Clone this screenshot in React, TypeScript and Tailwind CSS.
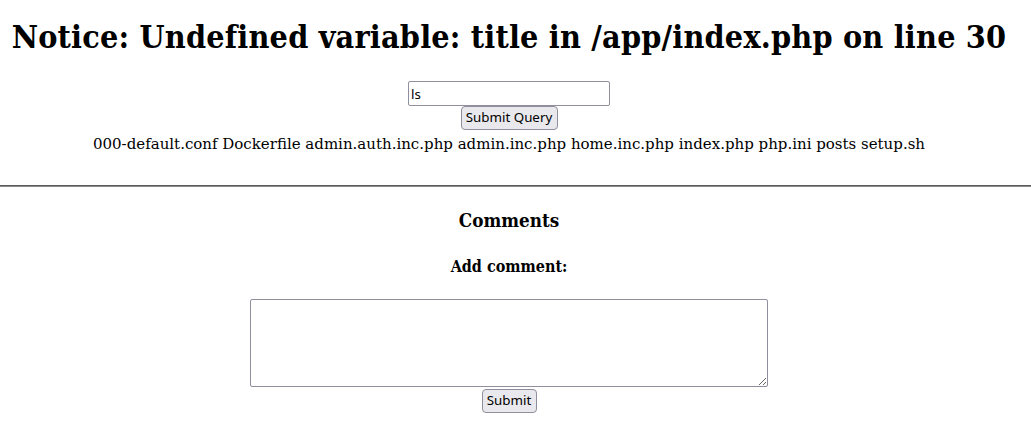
export default function App() {
    return (
        <div className="min-h-screen bg-white text-center text-black">
            <div className="pr-[13px] font-['DejaVu_Serif',serif]">
                {/* PHP notice */}
                <h1 className="pt-[19px] font-['DejaVu_Serif_Condensed',serif] text-[32px] font-bold leading-[37px] tracking-[0.2px]">
                    Notice: Undefined variable: title in /app/index.php on line 30
                </h1>

                {/* Command form */}
                <form className="mt-[25px] flex flex-col items-center font-['Noto_Sans',sans-serif] text-[13.33px]">
                    <input
                        type="text"
                        defaultValue="ls"
                        className="h-[25px] w-[202px] rounded-[2px] border border-[#8f8f9d] bg-white px-[2px] text-black outline-none"
                    />
                    <button
                        type="button"
                        className="h-[24px] w-[97px] rounded-[4px] border border-[#8f8f9d] bg-[#e9e9ed] leading-none text-black"
                    >
                        Submit Query
                    </button>
                </form>
                <p className="mt-[5px] text-[15px] leading-[18px]">
                    000-default.conf Dockerfile admin.auth.inc.php admin.inc.php home.inc.php index.php php.ini posts setup.sh
                </p>
            </div>

            <hr className="mt-[32px] border-t border-b border-t-[#5c5c5c] border-b-[#8a8a8a]" />

            {/* Comments */}
            <div className="pr-[13px] font-['DejaVu_Serif_Condensed',serif] font-bold">
                <h3 className="mt-[22px] text-[18.72px] leading-[22px]">Comments</h3>
                <h4 className="mt-[26px] text-[16px] leading-[19px]">Add comment:</h4>
                <div className="mt-[23px] flex flex-col items-center gap-[2px] font-normal">
                    <textarea className="h-[88px] w-[518px] rounded-[2px] border border-[#8f8f9d] bg-white outline-none" />
                    <button
                        type="button"
                        className="h-[24px] w-[55px] rounded-[4px] border border-[#8f8f9d] bg-[#e9e9ed] font-['Noto_Sans',sans-serif] text-[13.33px] leading-none text-black"
                    >
                        Submit
                    </button>
                </div>
            </div>
        </div>
    );
}
